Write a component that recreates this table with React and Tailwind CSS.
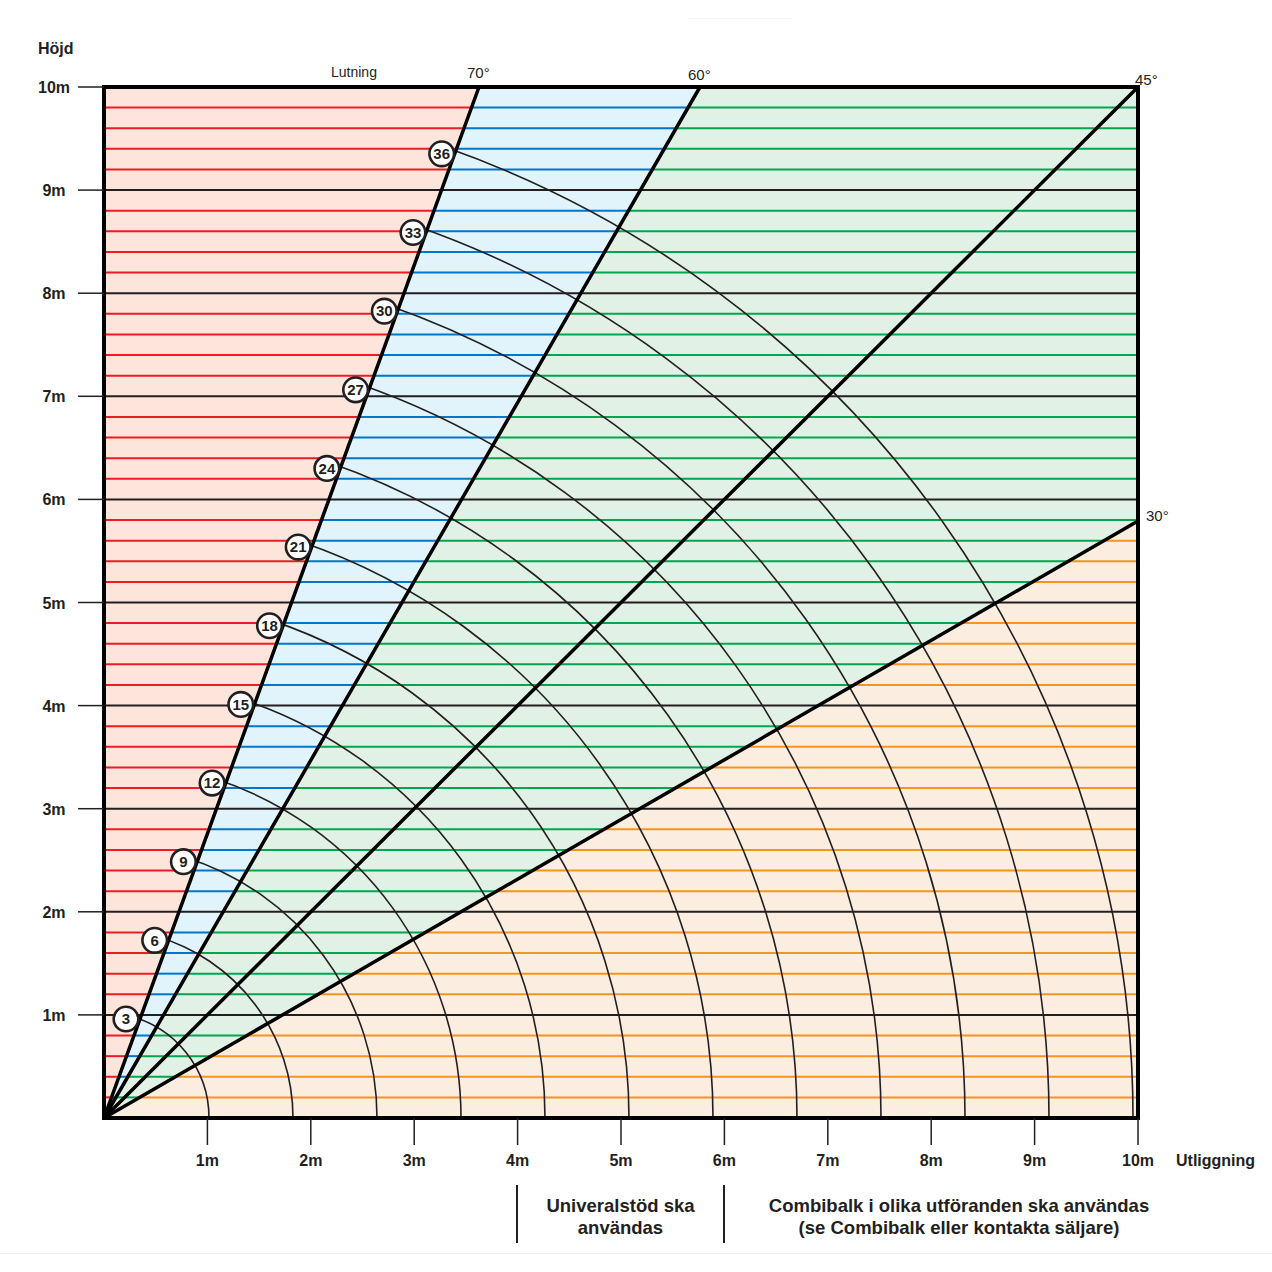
import React from 'react';

const X0 = 104;
const Y0 = 1118;
const XR = 1138;
const YT = 87;
const PX_X = 103.4;
const PX_Y = 103.1;

const x70 = (y) => X0 + ((Y0 - y) * 375) / 1031;
const x60 = (y) => X0 + ((Y0 - y) * 596) / 1031;
const x30 = (y) => X0 + ((Y0 - y) * 1034) / 597;

const INK = '#231f20';

function gridLines() {
  const out = [];
  for (let j = 1; j < 50; j++) {
    const y = Y0 - j * 20.62;
    if (j % 5 === 0) {
      out.push(<line key={j} x1={X0} x2={XR} y1={y} y2={y} stroke={INK} strokeWidth="2" />);
      continue;
    }
    const a = x70(y);
    const b = x60(y);
    const c = Math.min(x30(y), XR);
    out.push(<line key={j + 'r'} x1={X0} x2={a} y1={y} y2={y} stroke="#ed1c24" strokeWidth="2" />);
    out.push(<line key={j + 'b'} x1={a} x2={b} y1={y} y2={y} stroke="#0077c8" strokeWidth="2" />);
    out.push(<line key={j + 'g'} x1={b} x2={c} y1={y} y2={y} stroke="#00a651" strokeWidth="2" />);
    if (c < XR) out.push(<line key={j + 'o'} x1={c} x2={XR} y1={y} y2={y} stroke="#f7941d" strokeWidth="2" />);
  }
  return out;
}

const labels = Array.from({ length: 12 }, (_, i) => {
  const k = i + 1;
  const r = 105 + 84 * i;
  const cx = 126 + 28.7 * i;
  const cy = 1019 - 78.65 * i;
  const th = Math.atan2(Y0 - cy, cx - X0);
  return { n: k * 3, r, cx, cy, sx: X0 + r * Math.cos(th), sy: Y0 - r * Math.sin(th) };
});

export default function App() {
  const font = '"Liberation Sans", Arial, sans-serif';
  return (
    <div className="w-[1272px] h-[1272px] bg-white font-['Liberation_Sans',Arial,sans-serif] text-[#231f20]">
      <svg width="1272" height="1180" className="block" fontFamily={font}>
        <line x1="688" x2="792" y1="18.5" y2="18.5" stroke="#f4f4f4" strokeWidth="1" />

        {/* zones */}
        <polygon points={`${X0},${YT} 479,${YT} ${X0},${Y0}`} fill="#fde5dc" />
        <polygon points={`479,${YT} 700,${YT} ${X0},${Y0}`} fill="#e1f3fb" />
        <polygon points={`700,${YT} ${XR},${YT} ${XR},521 ${X0},${Y0}`} fill="#e2f1e5" />
        <polygon points={`${X0},${Y0} ${XR},521 ${XR},${Y0}`} fill="#fbeddf" />

        {gridLines()}

        {/* radius arcs */}
        {labels.map((l) => (
          <path
            key={l.n}
            d={`M${l.sx},${l.sy} A${l.r},${l.r} 0 0 1 ${X0 + l.r},${Y0}`}
            fill="none"
            stroke={INK}
            strokeWidth="1.6"
          />
        ))}

        {/* slope lines */}
        <g stroke="#000" strokeWidth="3.5" strokeLinecap="round">
          <line x1={X0} y1={Y0} x2="479" y2={YT} />
          <line x1={X0} y1={Y0} x2="700" y2={YT} />
          <line x1={X0} y1={Y0} x2={XR} y2={YT} />
          <line x1={X0} y1={Y0} x2={XR} y2="521" />
        </g>

        <rect x={X0} y={YT} width={XR - X0} height={Y0 - YT} fill="none" stroke="#000" strokeWidth="4" />

        {labels.map((l) => (
          <g key={'c' + l.n}>
            <circle cx={l.cx} cy={l.cy} r="12.3" fill="#fff" stroke={INK} strokeWidth="2.6" />
            <text x={l.cx} y={l.cy + 5.3} textAnchor="middle" fontSize="15" fontWeight="700" fill={INK}>
              {l.n}
            </text>
          </g>
        ))}

        {/* y axis */}
        <text x="38" y="54" fontSize="16" fontWeight="700" fill={INK}>Höjd</text>
        {Array.from({ length: 10 }, (_, i) => {
          const m = i + 1;
          const y = Y0 - m * PX_Y;
          return (
            <g key={'y' + m}>
              <line x1="78" x2={X0} y1={y} y2={y} stroke={INK} strokeWidth="1.5" />
              <text x="54" y={y + 6} textAnchor="middle" fontSize="16" fontWeight="700" fill={INK}>{m}m</text>
            </g>
          );
        })}

        {/* x axis */}
        {Array.from({ length: 10 }, (_, i) => {
          const m = i + 1;
          const x = X0 + m * PX_X;
          return (
            <g key={'x' + m}>
              <line x1={x} x2={x} y1={Y0} y2="1145" stroke={INK} strokeWidth="1.5" />
              <text x={x} y="1166" textAnchor="middle" fontSize="16" fontWeight="700" fill={INK}>{m}m</text>
            </g>
          );
        })}
        <text x="1176" y="1166" fontSize="16" fontWeight="700" fill={INK}>Utliggning</text>

        {/* slope labels */}
        <text x="331" y="77" fontSize="14" fill={INK}>Lutning</text>
        <text x="467" y="78" fontSize="15" fill={INK}>70°</text>
        <text x="688" y="80" fontSize="15" fill={INK}>60°</text>
        <text x="1135" y="85" fontSize="15" fill={INK}>45°</text>
        <text x="1146" y="521" fontSize="15" fill={INK}>30°</text>
      </svg>

      <div className="flex pl-[516px] pt-[5px] text-[18.5px] font-bold leading-[22px]">
        <div className="w-[207px] h-[58px] pt-[5px] border-l-2 border-[#231f20] flex flex-col items-center justify-center text-center">
          <span>Univeralstöd ska</span>
          <span>användas</span>
        </div>
        <div className="w-[470px] h-[58px] pt-[5px] border-l-2 border-[#231f20] flex flex-col items-center justify-center text-center">
          <span>Combibalk i olika utföranden ska användas</span>
          <span>(se Combibalk eller kontakta säljare)</span>
        </div>
      </div>
      <div className="mt-[10px] h-px bg-[#f2f2f2]" />
    </div>
  );
}
